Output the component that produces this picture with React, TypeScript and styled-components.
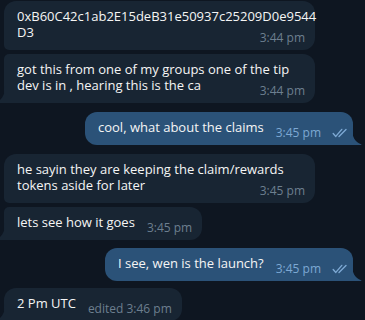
import React from "react";
import styled, { createGlobalStyle, css } from "styled-components";

const Global = createGlobalStyle`
  html, body {
    margin: 0;
    padding: 0;
    height: 100%;
    overflow: hidden;
    background: #0e1621;
  }
  body {
    font-family: "Open Sans", "Noto Sans", sans-serif;
  }
`;

const Chat = styled.div`
  display: flex;
  flex-direction: column;
  padding: 1px 12px 0 4px;
`;

const Row = styled.div<{ $out?: boolean; $gap: number }>`
  display: flex;
  justify-content: ${(p) => (p.$out ? "flex-end" : "flex-start")};
  margin-top: ${(p) => p.$gap}px;
`;

const Bubble = styled.div<{
  $out?: boolean;
  $first?: boolean;
  $last?: boolean;
}>`
  position: relative;
  display: flow-root;
  max-width: 311px;
  box-sizing: border-box;
  padding: 7px 10px 10px 13px;
  font-size: 13px;
  line-height: 16px;
  color: #f5f5f5;
  ${(p) =>
    p.$out
      ? css`
          background: #2b5278;
          padding-right: 5px;
          border-radius: 12px 12px 0 12px;
        `
      : css`
          background: #182533;
          border-radius: ${p.$first ? 12 : 5}px 12px 12px
            ${p.$last ? 0 : 5}px;
        `}
`;

const Meta = styled.span<{ $out?: boolean }>`
  float: right;
  position: relative;
  top: 6px;
  display: inline-flex;
  align-items: center;
  margin-left: 12px;
  font-size: 12px;
  line-height: 16px;
  color: ${(p) => (p.$out ? "#7da8d3" : "#6d7f8f")};
  white-space: nowrap;
`;

const Checks = styled.svg`
  margin-left: 11px;
  width: 16px;
  height: 10px;
`;

const TailSvg = styled.svg<{ $out?: boolean }>`
  position: absolute;
  bottom: 0;
  width: 10px;
  height: 17px;
  ${(p) => (p.$out ? "right: -9px;" : "left: -9px; transform: scaleX(-1);")}
`;

const Tail = ({ out }: { out?: boolean }) => (
  <TailSvg $out={out} viewBox="0 0 10 17">
    <path
      d="M0 0 C0 9 3 14 9 16.2 C9.6 16.4 9.5 17 9 17 L0 17 Z"
      fill={out ? "#2b5278" : "#182533"}
    />
  </TailSvg>
);

const DoubleCheck = () => (
  <Checks viewBox="0 0 16 10" fill="none">
    <path
      d="M1.2 5.6 L3.8 8.4 L9.8 1.4"
      stroke="#7da8d3"
      strokeWidth="1.4"
      strokeLinecap="round"
      strokeLinejoin="round"
    />
    <path
      d="M7 8.4 L14 1.4"
      stroke="#7da8d3"
      strokeWidth="1.4"
      strokeLinecap="round"
      strokeLinejoin="round"
    />
  </Checks>
);

type Msg = {
  out?: boolean;
  text: React.ReactNode;
  time: string;
  gap: number;
  first?: boolean;
  last?: boolean;
};

const messages: Msg[] = [
  {
    text: (
      <>
        0xB60C42c1ab2E15deB31e50937c25209D0e9544
        <br />
        D3
      </>
    ),
    time: "3:44 pm",
    gap: 0,
    first: true,
  },
  {
    text: "got this from one of my groups one of the tip dev is in , hearing this is the ca",
    time: "3:44 pm",
    gap: 4,
    last: true,
  },
  { out: true, text: "cool, what about the claims", time: "3:45 pm", gap: 9 },
  {
    text: "he sayin they are keeping the claim/rewards tokens aside for later",
    time: "3:45 pm",
    gap: 9,
    first: true,
  },
  { text: "lets see how it goes", time: "3:45 pm", gap: 4, last: true },
  { out: true, text: "I see, wen is the launch?", time: "3:45 pm", gap: 8 },
  {
    text: "2 Pm UTC",
    time: "edited 3:46 pm",
    gap: 7,
    first: true,
    last: true,
  },
];

export default function App() {
  return (
    <>
      <Global />
      <Chat>
        {messages.map((m, i) => (
          <Row key={i} $out={m.out} $gap={m.gap}>
            <Bubble $out={m.out} $first={m.first} $last={m.last || m.out}>
              {m.text}
              <Meta $out={m.out}>
                {m.time}
                {m.out && <DoubleCheck />}
              </Meta>
              {(m.out || m.last) && <Tail out={m.out} />}
            </Bubble>
          </Row>
        ))}
      </Chat>
    </>
  );
}
